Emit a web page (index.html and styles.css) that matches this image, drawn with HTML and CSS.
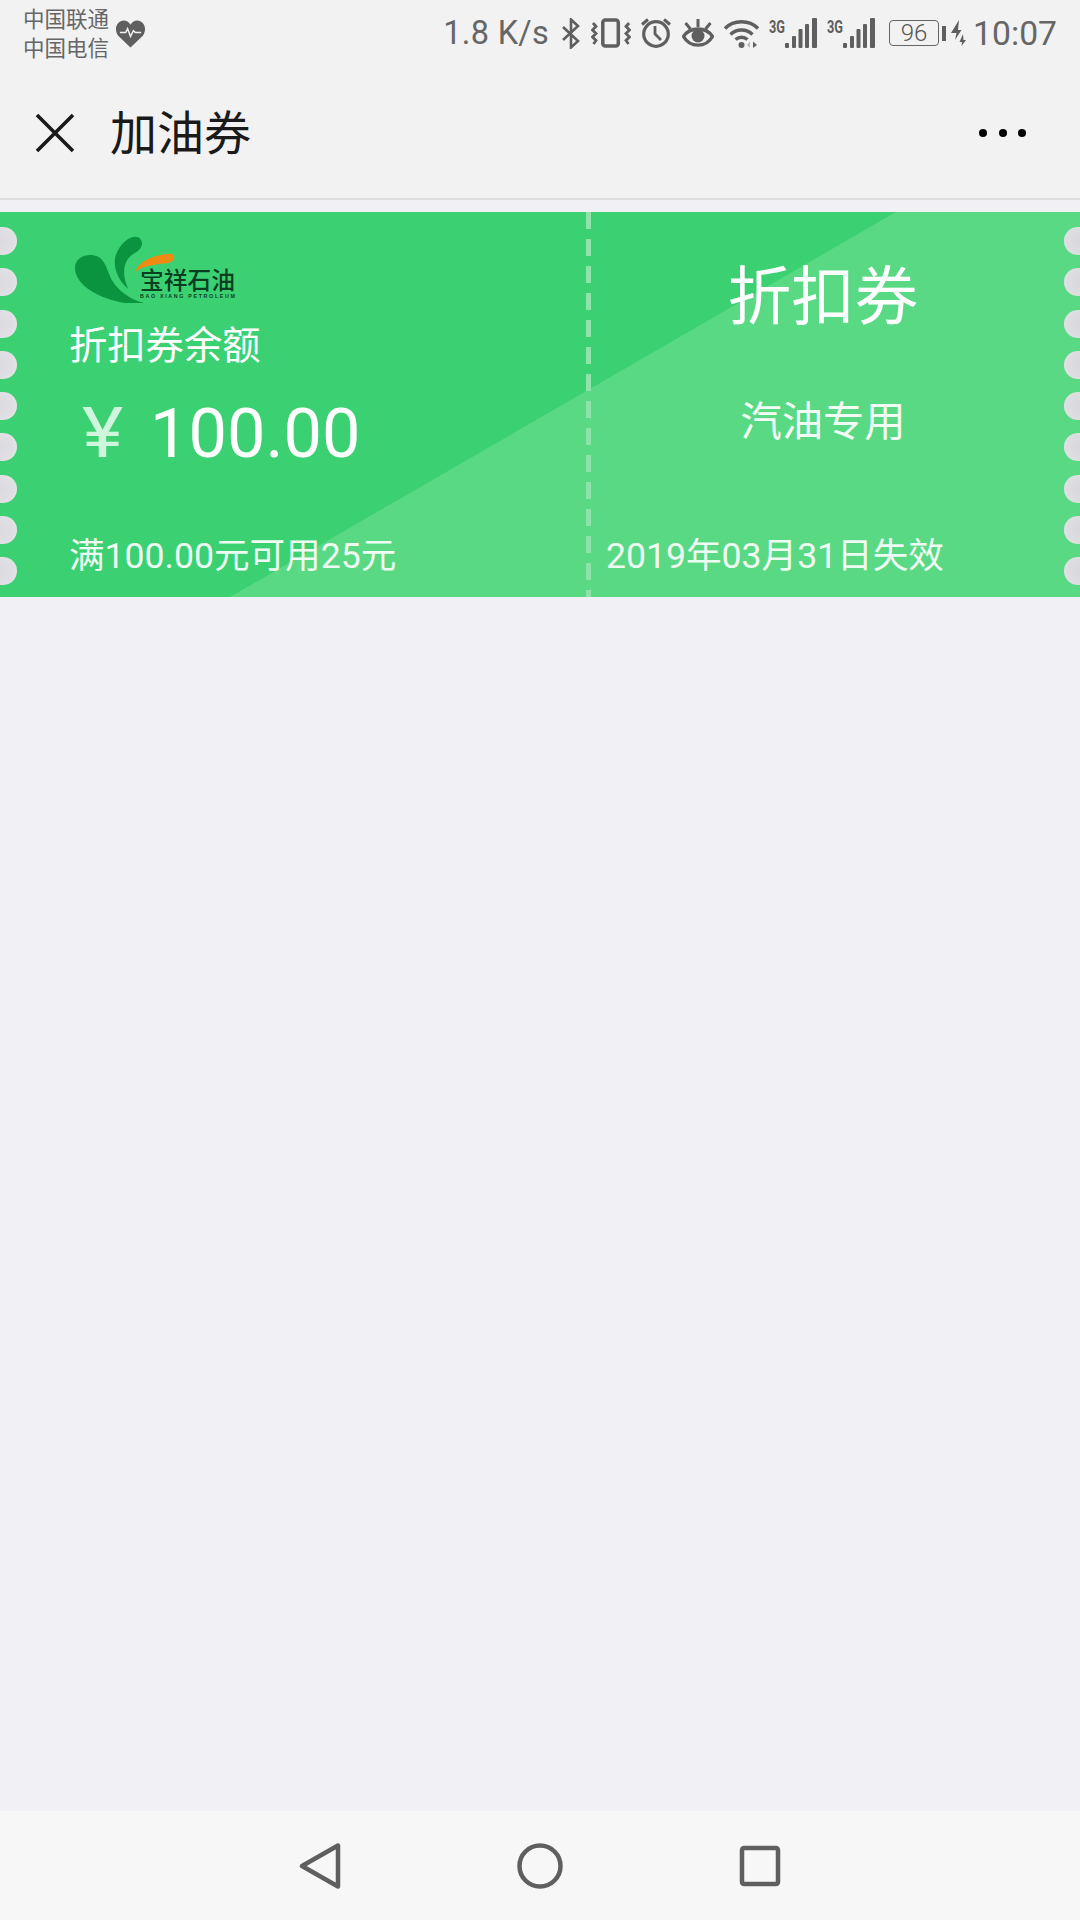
FILE: index.html
```html
<!DOCTYPE html>
<html lang="zh-CN">
<head>
<meta charset="utf-8">
<title>加油券</title>
<link rel="stylesheet" href="styles.css">
</head>
<body>
<div class="page">
  <div class="top">
    <div class="status">
      <div class="carriers"><div>中国联通</div><div>中国电信</div></div>
      <svg class="heart" viewBox="0 0 32 30"><path d="M16 29.500 L3 17 C-2 9 3 1.500 9 1.500 C12 1.500 15 3.500 16 6 C17 3.500 20 1.500 23 1.500 C29 1.500 34 9 29 17Z" fill="#5f5f5f"/><path d="M5 14 H11 L13 10 L16 18 L19 12 L21 14 H27" fill="none" stroke="#f2f2f2" stroke-width="1.500"/></svg>
      <div class="speed">1.8 K/s</div>
      <svg class="ic bt" viewBox="0 0 20 31"><path d="M2 9 L17 23 L10 29.500 V1.500 L17 8 L2 22" fill="none" stroke="#5f5f5f" stroke-width="2.600"/></svg>
      <svg class="ic vib" viewBox="0 0 40 30"><rect x="11.800" y="2" width="15.500" height="26" rx="2.500" fill="none" stroke="#5f5f5f" stroke-width="3.500"/><path d="M2 5 L5 8.500 L1.500 12 L5 15.500 L1.500 19 L5 22.500 L2.500 26 M38 5 L35 8.500 L38.500 12 L35 15.500 L38.500 19 L35 22.500 L37.500 26" fill="none" stroke="#5f5f5f" stroke-width="2.800"/></svg>
      <svg class="ic alarm" viewBox="0 0 30 30"><circle cx="15" cy="16" r="12.300" fill="none" stroke="#5f5f5f" stroke-width="3.200"/><path d="M14 8 V16 L20 22" fill="none" stroke="#5f5f5f" stroke-width="2.800"/><path d="M1 6.500 L7 1.500 M29 6.500 L23 1.500" stroke="#5f5f5f" stroke-width="3"/></svg>
      <svg class="ic eye" viewBox="0 0 32 29"><path d="M1.500 17.500 C8 7.500 24 7.500 30.500 17.500 C24 29 8 29 1.500 17.500Z" fill="none" stroke="#5f5f5f" stroke-width="3.400"/><circle cx="16" cy="17" r="6.500" fill="#5f5f5f"/><path d="M16 0 V8 M3.500 4 L8.500 10 M28.500 4 L23.500 10" stroke="#5f5f5f" stroke-width="3"/></svg>
      <svg class="ic wifi" viewBox="0 0 35 29"><path d="M1 9.500 C9.500 0.500 25.500 0.500 34 9.500 M6.500 15.500 C12.500 9.500 22.500 9.500 28.500 15.500 M11.500 20.500 C15 17.500 20 17.500 23.500 20.500" fill="none" stroke="#5f5f5f" stroke-width="3.400"/><circle cx="17.500" cy="26" r="3" fill="#5f5f5f"/><path d="M29 22.500 L33 26 L29 29Z" fill="#5f5f5f"/><path d="M26 22.500 L23 26 L26 29Z" fill="#bbbbbb"/></svg>
      <svg class="ic sig" viewBox="0 -6 48 36"><text class="g3" x="0" y="15" textLength="16" lengthAdjust="spacingAndGlyphs">3G</text><rect x="16" y="25" width="4" height="5" rx="1" fill="#5f5f5f"/><rect x="23" y="18" width="4" height="12" rx="1" fill="#5f5f5f"/><rect x="29.500" y="11" width="4" height="19" rx="1" fill="#5f5f5f"/><rect x="36" y="6" width="4" height="24" rx="1" fill="#5f5f5f"/><rect x="43" y="0" width="5" height="30" rx="1" fill="#5f5f5f"/></svg>
      <svg class="ic sig sig2" viewBox="0 -6 48 36"><text class="g3" x="0" y="15" textLength="16" lengthAdjust="spacingAndGlyphs">3G</text><rect x="16" y="25" width="4" height="5" rx="1" fill="#5f5f5f"/><rect x="23" y="18" width="4" height="12" rx="1" fill="#5f5f5f"/><rect x="29.500" y="11" width="4" height="19" rx="1" fill="#5f5f5f"/><rect x="36" y="6" width="4" height="24" rx="1" fill="#5f5f5f"/><rect x="43" y="0" width="5" height="30" rx="1" fill="#5f5f5f"/></svg>
      <div class="battery">96</div>
      <div class="nub"></div>
      <svg class="ic bolt" viewBox="0 0 15 26"><path d="M8 0 L0 13 H5.500 L4 20 L10.500 10 H7Z M12 14 L8.500 22 H11 L10.500 26 L15 20 H12.500Z" fill="#5f5f5f"/></svg>
      <div class="clock">10:07</div>
    </div>
    <div class="bar">
      <svg class="close" viewBox="0 0 40 40"><path d="M2 2 L38 38 M38 2 L2 38" stroke="#1a1a1a" stroke-width="3.600"/></svg>
      <div class="title">加油券</div>
      <div class="more"><span></span><span></span><span></span></div>
    </div>
  </div>

  <main class="content">
    <section class="ticket">
      <div class="notches notches-left"><i></i><i></i><i></i><i></i><i></i><i></i><i></i><i></i><i></i></div>
      <div class="notches notches-right"><i></i><i></i><i></i><i></i><i></i><i></i><i></i><i></i><i></i></div>
      <div class="left">
        <svg class="logo" viewBox="210 100 510 210">
          <path d="M440 312 C350 322 225 272 225 205 C225 175 255 163 280 167 C315 172 320 210 335 240 C355 275 395 302 440 312Z" fill="#0a9440"/>
          <path d="M385 268 C350 240 335 190 350 160 C365 125 395 105 415 113 C435 125 425 150 405 160 C375 175 360 215 385 268Z" fill="#0a9440"/>
          <path d="M405 218 C415 185 460 165 510 162 C530 163 525 185 505 190 C470 195 430 195 405 218Z" fill="#f08a10"/>
          <text class="logo-cn" x="420" y="269" textLength="285" lengthAdjust="spacingAndGlyphs">宝祥石油</text>
          <text class="logo-en" x="420" y="296" textLength="285">BAO XIANG PETROLEUM</text>
        </svg>
        <div class="label">折扣券余额</div>
        <div class="amount"><span class="yen">¥</span><span class="num">100.00</span></div>
        <div class="note">满100.00元可用25元</div>
      </div>
      <div class="right">
        <div class="kind">折扣券</div>
        <div class="use">汽油专用</div>
        <div class="expire">2019年03月31日失效</div>
      </div>
    </section>
  </main>

  <nav class="nav">
    <div class="nav-item"><svg viewBox="0 0 46 46"><path d="M5 23 L41 2.500 V43.500Z" fill="none" stroke="#5f5f5f" stroke-width="4.500" stroke-linejoin="round"/></svg></div>
    <div class="nav-item"><svg viewBox="0 0 46 46"><circle cx="23" cy="23" r="20.500" fill="none" stroke="#5f5f5f" stroke-width="4.500"/></svg></div>
    <div class="nav-item"><svg viewBox="0 0 46 46"><rect x="5" y="5" width="36" height="36" rx="2" fill="none" stroke="#5f5f5f" stroke-width="4.500"/></svg></div>
  </nav>
</div>
</body>
</html>
```

FILE: styles.css
```css
* { box-sizing: border-box; }
html, body { margin: 0; padding: 0; }
body {
  width: 1080px;
  height: 1920px;
  overflow: hidden;
  font-family: Roboto, "Noto Sans CJK SC", sans-serif;
  background: #f0f0f5;
}
.page { display: flex; flex-direction: column; height: 1920px; }

.top { background: #f2f2f2; border-bottom: 2px solid #dedee1; height: 200px; flex: none; }
.status {
  height: 66px;
  padding: 0 23px 0 23px;
  display: flex;
  align-items: center;
  color: #666;
}
.carriers { font-size: 21.500px; line-height: 29px; width: 88px; color: #666; margin-top: 2px; }
.heart { width: 31px; height: 29px; margin: 0 0 0 4px; flex: none; }
.speed { font-size: 32.500px; margin-left: auto; margin-right: 12px; color: #666; letter-spacing: .3px; }
.ic { flex: none; display: block; }
.bt { width: 20px; height: 31px; margin-right: 10px; }
.vib { width: 40px; height: 30px; margin-right: 10px; }
.alarm { width: 30px; height: 30px; margin-right: 11px; }
.eye { width: 32px; height: 29px; margin-right: 10px; }
.wifi { width: 35px; height: 29px; margin-right: 10px; }
.sig { width: 48px; height: 36px; margin-top: -6px; }
.sig2 { margin-left: 10px; margin-right: 14px; }
.g3 { font-family: "Liberation Sans Narrow", Roboto, sans-serif; font-size: 18px; font-weight: 700; fill: #5f5f5f; }
.battery {
  width: 50px;
  height: 26px;
  border: 1.500px solid #666;
  border-radius: 4px;
  font-size: 24px;
  font-weight: 300;
  line-height: 24px;
  text-align: center;
  color: #555;
}
.nub { width: 4px; height: 15px; background: #5f5f5f; margin: 0 5px 0 3px; }
.bolt { width: 15px; height: 26px; margin-right: 7px; }
.clock { font-size: 33.700px; color: #666; }

.bar { height: 132px; display: flex; align-items: center; position: relative; padding: 0 54px 0 35px; }
.close { width: 40px; height: 40px; flex: none; margin-top: 2px; }
.title { font-size: 47px; margin-left: 35px; color: #1a1a1a; line-height: 60px; margin-top: 3px; }
.more { margin-left: auto; display: flex; gap: 11.500px; margin-top: 1px; }
.more span { width: 8px; height: 8px; border-radius: 50%; background: #000; }

.content { flex: 1; padding-top: 12px; }
.ticket {
  position: relative;
  height: 385px;
  display: flex;
  overflow: hidden;
  background: #3bd172;
  color: #fff;
}
.ticket::before {
  content: "";
  position: absolute;
  inset: 0;
  background: #59d984;
  clip-path: polygon(230px 100%, 896px 0, 100% 0, 100% 100%);
}
.ticket::after {
  content: "";
  position: absolute;
  top: 0;
  bottom: 0;
  left: 586px;
  width: 5px;
  background: repeating-linear-gradient(to bottom, #8fe3a9 0 17px, transparent 17px 27px);
}
.notches {
  position: absolute;
  top: 15px;
  display: flex;
  flex-direction: column;
  gap: 13.250px;
  z-index: 2;
}
.notches i {
  display: block;
  width: 30px;
  height: 28px;
  border-radius: 14px;
}
.notches-left { left: -13px; }
.notches-left i { background: radial-gradient(circle at 40% 50%, #dcdadf 0, #e0dfe3 65%, #ececef 100%); }
.notches-right { right: -14px; }
.notches-right i { background: radial-gradient(circle at 55% 50%, #d8d8dc 0, #dedee2 65%, #ececef 100%); }
.left, .right { position: relative; z-index: 1; display: flex; flex-direction: column; }
.left { width: 590px; padding: 21px 0 19px 69px; }
.logo { width: 170px; height: 70px; display: block; flex: none; margin-left: 1px; }
.logo-cn { font-family: "Noto Sans CJK SC", sans-serif; font-size: 71px; font-weight: 500; fill: #0b3d1f; }
.logo-en { font-family: "Liberation Sans", sans-serif; font-size: 16px; font-weight: 700; fill: #0b3d1f; }
.label { font-size: 38.300px; line-height: 48px; margin-top: 19px; }
.amount { line-height: 80px; margin-top: 23px; padding-left: 13px; display: flex; align-items: baseline; white-space: pre; }
.yen { color: #cff5dc; font-size: 70px; line-height: 80px; width: 68px; display: inline-block; transform: scaleX(1.12); transform-origin: left center; }
.num { font-size: 68.500px; }
.note { font-size: 35.600px; line-height: 44px; margin-top: auto; color: #eefbf2; }
.right { width: 466px; padding: 46px 0 19px 0; align-items: center; }
.kind { font-size: 63.500px; line-height: 80px; }
.use { font-size: 41.300px; line-height: 50px; margin-top: 59px; color: #f2fcf5; }
.expire { font-size: 35.600px; line-height: 44px; margin-top: auto; align-self: flex-start; padding-left: 16px; color: #eefbf2; }

.nav {
  height: 109px;
  flex: none;
  background: #f7f7f7;
  display: flex;
  justify-content: center;
  align-items: center;
}
.nav-item { width: 220px; display: flex; justify-content: center; }
.nav-item svg { width: 46px; height: 46px; display: block; }
```
